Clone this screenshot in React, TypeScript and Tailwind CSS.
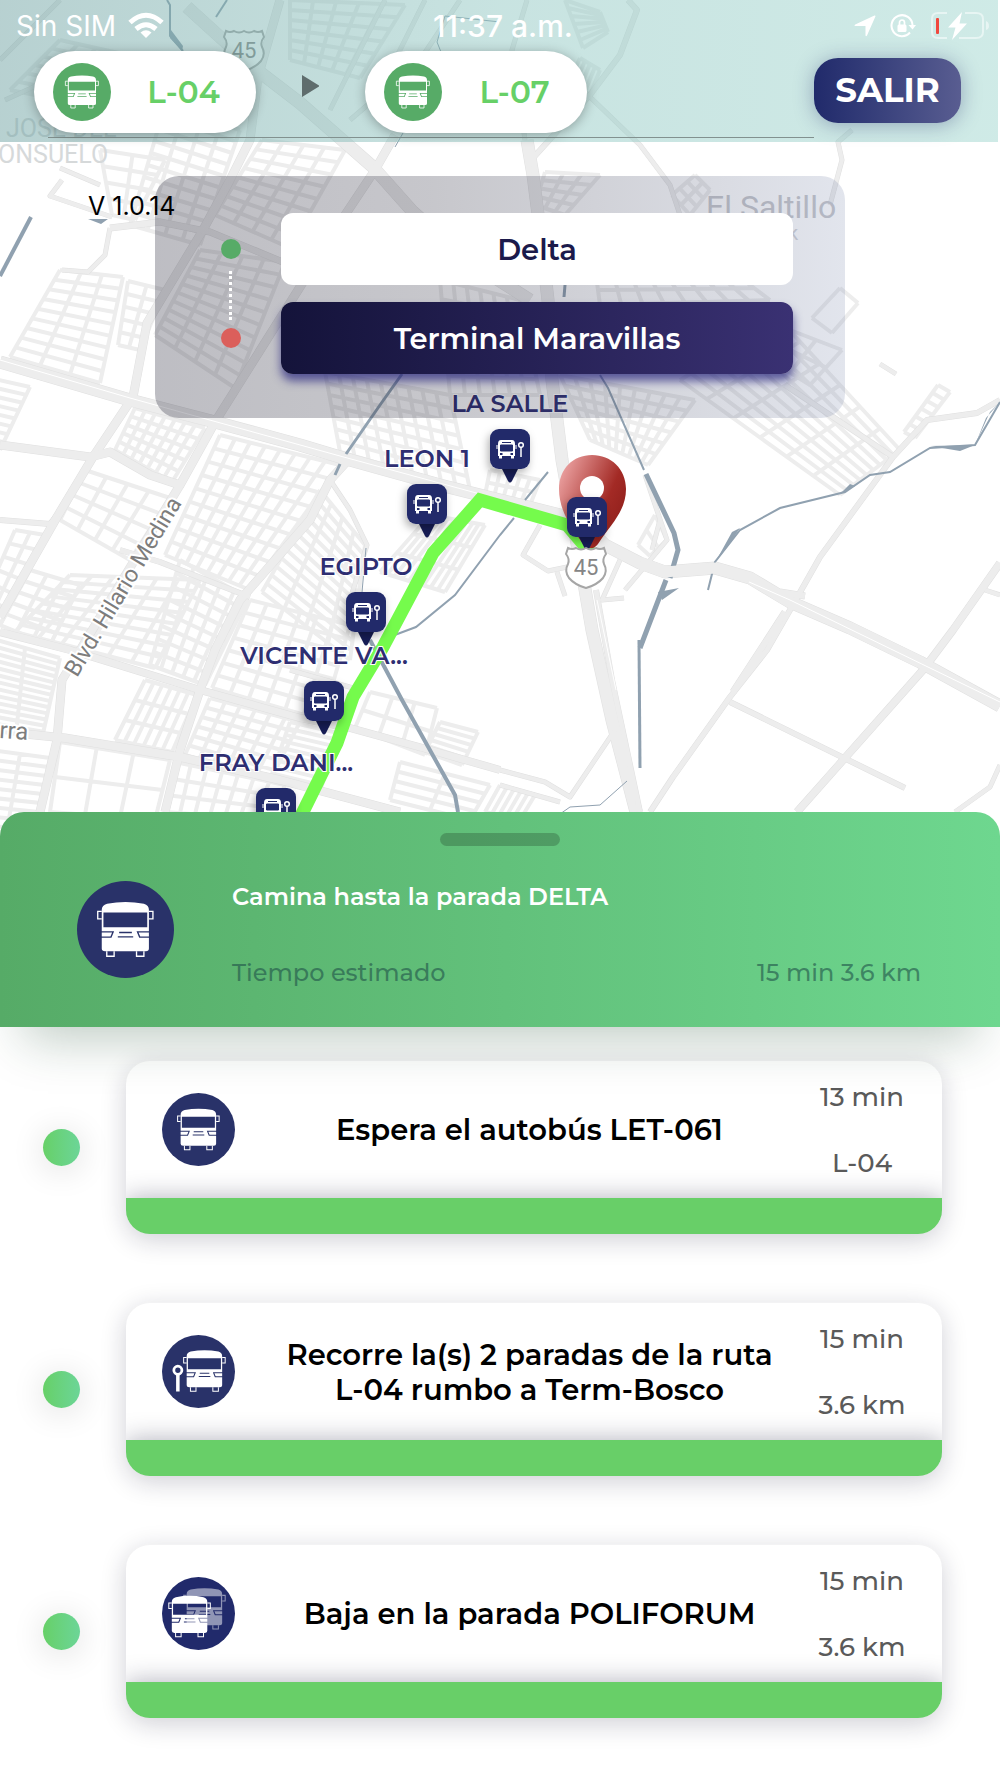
import type { ReactNode } from "react";

type Point = [number, number];

// Calles principales: trazado y ancho
const roads = [
  { d: "M187 7L253 67L300 103L373 167L413 212L470 262L530 300", w: 12 },
  { d: "M527 140L533 175L540 230L548 300L552 380L562 460L580 560L592 630L612 720L636 812", w: 12 },
  { d: "M596 590L612 680L640 812", w: 5 },
  { d: "M280 0L258 77L250 140L230 180L203 230L177 273L147 323L133 397L93 457L57 517L0 617", w: 8 },
  { d: "M0 362L130 400L215 422L300 445L350 460L440 485L500 500L580 520L605 545L640 563L665 572L715 568L750 578L790 602L850 628L920 662L1000 706", w: 12 },
  { d: "M0 445L90 457L110 452L150 475L180 485L215 422L300 287L345 215L375 170L395 135", w: 8 },
  { d: "M180 485L62 680L57 740L40 812", w: 8 },
  { d: "M350 458L330 480L310 520L240 600L215 650L200 690L180 750L165 812", w: 8 },
  { d: "M0 632L70 650L200 690L300 718L350 728L430 750L500 770", w: 7 },
  { d: "M25 734L65 738L180 757L280 780L400 812", w: 8 },
  { d: "M0 520L50 524L60 512", w: 5 },
  { d: "M120 550L160 562L250 597", w: 5 },
  { d: "M797 812L923 670L953 630L1000 563", w: 7 },
  { d: "M650 812L673 777L730 697L767 650L790 610L820 557L893 457L927 420L977 413L1000 400", w: 5 },
  { d: "M733 692L785 612M780 592L805 596", w: 6 },
  { d: "M730 702L905 788", w: 5 },
  { d: "M785 385L893 457", w: 5 },
  { d: "M500 770L545 782L570 797L615 730", w: 4 },
  { d: "M500 785L560 802", w: 4 },
  { d: "M628 0L637 10L620 55L590 95L533 158L540 230", w: 5 },
  { d: "M590 97L640 145L670 185L680 215M527 0L512 50L525 140", w: 4 },
  { d: "M852 130L838 142L842 160L830 205M880 364L896 374", w: 4 },
  { d: "M540 525L523 555L548 571L572 566M557 572L565 596M620 560L602 600L624 598", w: 4 },
  { d: "M645 475L667 540L625 590M652 550L660 520", w: 4 },
  { d: "M62 180L50 196L112 217M110 228L105 255L88 272L62 270M60 168L100 185", w: 4 },
  { d: "M110 228L160 222L210 232L290 265", w: 6 },
  { d: "M0 60L60 0M5 100L60 75L110 110M350 120L420 60L460 0", w: 4 },
  { d: "M385 0L330 110M425 0L380 90M395 75L520 110", w: 4 },
  { d: "M330 480L350 510L367 545L350 600M290 670L360 690", w: 4 },
  { d: "M985 590L1000 595M1000 765L990 787L955 812", w: 4 },
];

// Manzanas: cuatro esquinas, filas y columnas
const blocks: { q: [Point, Point, Point, Point]; rows: number; cols: number }[] = [
  { q: [[60, 270], [123, 277], [100, 383], [10, 357]], rows: 9, cols: 3 },
  { q: [[128, 281], [165, 290], [140, 350], [118, 345]], rows: 5, cols: 2 },
  { q: [[200, 250], [285, 262], [235, 388], [155, 335]], rows: 10, cols: 4 },
  { q: [[165, 105], [240, 130], [200, 245], [130, 225]], rows: 10, cols: 4 },
  { q: [[262, 140], [345, 150], [290, 248], [215, 215]], rows: 8, cols: 4 },
  { q: [[100, 150], [165, 160], [135, 220], [112, 215]], rows: 4, cols: 2 },
  { q: [[60, 40], [150, 60], [110, 110], [10, 90]], rows: 6, cols: 5 },
  { q: [[290, 0], [405, 5], [360, 78], [290, 60]], rows: 6, cols: 5 },
  { q: [[-10, 378], [30, 387], [0, 450], [-20, 445]], rows: 8, cols: 1 },
  { q: [[135, 408], [205, 428], [172, 482], [115, 450]], rows: 5, cols: 7 },
  { q: [[220, 435], [340, 465], [250, 590], [165, 555]], rows: 9, cols: 8 },
  { q: [[85, 470], [170, 498], [130, 560], [60, 520]], rows: 4, cols: 4 },
  { q: [[70, 575], [200, 580], [155, 668], [15, 632]], rows: 8, cols: 6 },
  { q: [[180, 560], [248, 598], [205, 685], [150, 665]], rows: 8, cols: 5 },
  { q: [[30, 570], [80, 585], [50, 645], [0, 625]], rows: 5, cols: 3 },
  { q: [[250, 600], [350, 625], [322, 720], [212, 688]], rows: 7, cols: 6 },
  { q: [[320, 490], [365, 545], [350, 660], [262, 592]], rows: 12, cols: 4 },
  { q: [[-10, 638], [60, 658], [42, 738], [-10, 730]], rows: 13, cols: 2 },
  { q: [[15, 530], [45, 535], [0, 625], [-20, 610]], rows: 6, cols: 2 },
  { q: [[145, 680], [197, 695], [172, 752], [115, 740]], rows: 3, cols: 6 },
  { q: [[210, 698], [300, 722], [270, 780], [185, 755]], rows: 6, cols: 6 },
  { q: [[290, 722], [338, 733], [320, 792], [270, 780]], rows: 9, cols: 1 },
  { q: [[175, 762], [285, 785], [270, 820], [165, 812]], rows: 3, cols: 7 },
  { q: [[-10, 750], [50, 758], [35, 830], [-20, 825]], rows: 8, cols: 2 },
  { q: [[60, 742], [170, 760], [155, 820], [50, 812]], rows: 2, cols: 3 },
  { q: [[325, 372], [450, 395], [470, 490], [340, 452]], rows: 7, cols: 9 },
  { q: [[430, 515], [485, 525], [445, 592], [380, 572]], rows: 3, cols: 9 },
  { q: [[490, 470], [540, 480], [530, 505], [485, 495]], rows: 2, cols: 5 },
  { q: [[440, 280], [520, 300], [540, 395], [450, 395]], rows: 6, cols: 6 },
  { q: [[560, 375], [695, 400], [648, 465], [590, 440]], rows: 6, cols: 9 },
  { q: [[780, 320], [900, 450], [840, 495], [680, 380]], rows: 9, cols: 6 },
  { q: [[790, 330], [842, 350], [810, 385], [770, 360]], rows: 2, cols: 2 },
  { q: [[840, 288], [858, 303], [832, 333], [812, 318]], rows: 1, cols: 1 },
  { q: [[590, 230], [690, 240], [770, 300], [600, 305]], rows: 5, cols: 8 },
  { q: [[565, 0], [600, 12], [608, 32], [583, 48]], rows: 6, cols: 1 },
  { q: [[545, 172], [600, 175], [565, 215], [535, 205]], rows: 4, cols: 3 },
  { q: [[580, 58], [600, 70], [590, 95], [570, 80]], rows: 1, cols: 4 },
  { q: [[695, 175], [710, 190], [690, 215], [672, 195]], rows: 3, cols: 2 },
  { q: [[938, 385], [950, 392], [915, 438], [904, 432]], rows: 6, cols: 1 },
  { q: [[370, 692], [437, 708], [425, 755], [355, 728]], rows: 2, cols: 3 },
  { q: [[440, 722], [478, 732], [462, 765], [425, 752]], rows: 5, cols: 1 },
  { q: [[400, 762], [490, 785], [470, 820], [390, 800]], rows: 4, cols: 2 },
  { q: [[500, 785], [535, 795], [520, 820], [485, 812]], rows: 1, cols: 5 },
  { q: [[655, 515], [667, 540], [650, 556], [638, 545]], rows: 2, cols: 1 },
];

const rivers = [
  { d: "M167 0L170 5L170 36L183 51", w: 2 },
  { d: "M227 0L216 17", w: 2 },
  { d: "M500 22L445 16L437 42L441 52", w: 1 },
  { d: "M403 133L395 147", w: 1 },
  { d: "M31 217L0 276", w: 4 },
  { d: "M402 374L380 405L346 454M340 464L335 475", w: 3 },
  { d: "M565 285L564 297", w: 3 },
  { d: "M600 375L608 388L644 470", w: 2 },
  { d: "M646 474L674 533L678 550L670 578M666 580L640 648", w: 5 },
  { d: "M639 640L640 768", w: 3 },
  { d: "M627 781L600 805L570 807L560 814", w: 1 },
  { d: "M1000 402L975 445L930 448L890 472L870 475L845 492L780 508L740 530L715 562L708 590", w: 2 },
  { d: "M548 472L525 500M514 518L500 535L455 595L416 627L392 636", w: 2 },
  { d: "M366 548L362 592", w: 1 },
  { d: "M370 640L402 700L455 795L458 812", w: 4 },
];

const stops = [
  { name: "LA SALLE", x: 510, y: 429 },
  { name: "LEON 1", x: 427, y: 484 },
  { name: "EGIPTO", x: 366, y: 592 },
  { name: "VICENTE VA...", x: 324, y: 681 },
  { name: "FRAY DANI...", x: 276, y: 788 },
  { name: "", x: 587, y: 497 },
];

const lerp = (a: Point, b: Point, t: number): Point => [a[0] + (b[0] - a[0]) * t, a[1] + (b[1] - a[1]) * t];

const blockPath = ([a, b, c, d]: [Point, Point, Point, Point], rows: number, cols: number) => {
  const lines: string[] = [];
  for (let i = 0; i <= rows; i++) lines.push(`M${lerp(a, d, i / rows)}L${lerp(b, c, i / rows)}`);
  for (let i = 0; i <= cols; i++) lines.push(`M${lerp(a, b, i / cols)}L${lerp(d, c, i / cols)}`);
  return lines.join("");
};

const busBody =
  "M14 24Q14 10 30 6Q85 -5 140 6Q155 10 155 24V140Q155 148 146 148H24Q14 148 14 140Z" +
  "M19 32V76H150V32Z" +
  "M14 88H51L43 108H14V104H40L45 92H14Z" +
  "M155 88H118L126 108H155V104H129L124 92H155Z" +
  "M66 90V94H104V90ZM62 103V107H108V103Z";

const Bus = () => (
  <>
    <path d={busBody} fill="#fff" fillRule="evenodd" />
    <path d="M14 29H2V51H14M155 29H167V51H155M29 148V163H51V148M118 148V163H140V148" fill="none" stroke="#fff" strokeWidth="4" />
  </>
);

const RoundIcon = ({ className, children }: { className: string; children: ReactNode }) => (
  <svg viewBox="0 0 290 290" className={className} aria-hidden="true">
    <circle cx="145" cy="145" r="145" fill="currentColor" />
    {children}
  </svg>
);

const BusIcon = () => (
  <g transform="translate(60 62)">
    <Bus />
  </g>
);

const RideIcon = () => (
  <>
    <g transform="translate(84 60)">
      <Bus />
    </g>
    <circle cx="63" cy="140" r="16" fill="none" stroke="#fff" strokeWidth="11" />
    <path d="M63 156V224" stroke="#fff" strokeWidth="14" />
  </>
);

const ExitIcon = () => (
  <>
    <g transform="translate(84 44)" opacity=".5">
      <Bus />
    </g>
    <g transform="translate(25 74)">
      <Bus />
    </g>
  </>
);

const StopPin = ({ x, y }: { x: number; y: number }) => (
  <g transform={`translate(${x - 20} ${y})`}>
    <path d="M11 38H29L22 52Q20 55 18 52Z" fill="#171d56" />
    <rect width="40" height="40" rx="9" fill="#212a6b" filter="url(#pin-shadow)" />
    <path d="M11 11H22Q25 11 25 15V27H8V15Q8 11 11 11Z" fill="#fff" />
    <path d="M12 13.500H21M10.500 16H22.500V22H10.500Z" fill="#212a6b" stroke="#212a6b" strokeWidth="1" />
    <path d="M9 27V29.500H12V27M21 27V29.500H24V27" fill="#fff" />
    <path d="M7 16V20M26 16V20" stroke="#fff" strokeWidth="1" />
    <path d="M10 25H12.500M20.500 25H23" stroke="#212a6b" strokeWidth="2" />
    <circle cx="31" cy="16" r="2.300" fill="none" stroke="#fff" strokeWidth="1.500" />
    <path d="M31 18V28" stroke="#fff" strokeWidth="1.500" />
  </g>
);

const Shield = ({ x, y }: { x: number; y: number }) => (
  <g transform={`translate(${x} ${y})`}>
    <path
      d="M-18 -19Q-14 -17 -10 -19Q-5 -16 0 -19Q5 -16 10 -19Q14 -17 18 -19L20 -13Q16 -8 18 -3Q22 4 17 11Q11 18 0 21Q-11 18 -17 11Q-22 4 -18 -3Q-16 -8 -20 -13Z"
      fill="#fff"
      stroke="#a6a6a6"
      strokeWidth="2"
    />
    <text y="8" textAnchor="middle" fontSize="22" fill="#858585">
      45
    </text>
  </g>
);

const CityMap = () => (
  <svg
    viewBox="0 0 1000 840"
    preserveAspectRatio="xMidYMin slice"
    className="absolute inset-0 h-full w-full font-['Roboto',sans-serif]"
    role="img"
    aria-label="Mapa de la ruta">
    <defs>
      <filter id="pin-shadow" x="-50%" y="-50%" width="200%" height="200%">
        <feDropShadow dx="-2" dy="4" stdDeviation="4" floodOpacity=".3" />
      </filter>
      <linearGradient id="destination" x1="0" y1="0.100" x2="1" y2="0.700">
        <stop offset="0" stopColor="#f0a9a9" />
        <stop offset=".7" stopColor="#a32a25" />
        <stop offset="1" stopColor="#8f1f1b" />
      </linearGradient>
    </defs>

    {/* Calles */}
    <g fill="none" stroke="#ededed" strokeWidth="4" strokeLinejoin="round">
      {blocks.map((block, index) => (
        <path key={index} d={blockPath(block.q, block.rows, block.cols)} />
      ))}
    </g>

    {/* Avenidas */}
    <g fill="none" strokeLinejoin="round">
      {roads.map((road) => (
        <path key={road.d} d={road.d} stroke="#e0e0e0" strokeWidth={road.w + 1} />
      ))}
      {roads.map((road) => (
        <path key={road.d} d={road.d} stroke="#ededed" strokeWidth={road.w} />
      ))}
      <path d="M0 360L130 398L340 456L480 494M597 600L616 690M660 571L715 567L790 600L1000 702" stroke="#fff" strokeWidth="1" />
    </g>

    {/* Ríos */}
    <g fill="none" stroke="#90a1b0">
      {rivers.map((river) => (
        <path key={river.d} d={river.d} strokeWidth={river.w} />
      ))}
    </g>
    <path d="M930 446L975 445L960 451ZM658 592L679 588L662 600ZM88 219H108L101 224ZM1000 402L990 412L975 445L986 418ZM740 528L728 546L716 561L732 532ZM840 494L850 484L855 486ZM171 30L183 46L182 51L170 38Z" fill="#90a1b0" />
    <path d="M640 563L665 572L715 568L750 578" fill="none" stroke="#ededed" strokeWidth="11" />

    {/* Rótulos */}
    <Shield x={244} y={50} />
    <g fill="#d6d9da" fontSize="25">
      <text x="-18" y="137">N JOSE DEL</text>
      <text x="-2" y="163">ONSUELO</text>
    </g>
    <text x="706" y="218" fontSize="32" fill="#c6c7cc">
      El Saltillo
    </text>
    <text x="788" y="240" fontSize="20" fill="#d3d4d8">
      k
    </text>
    <g fill="#7d7d7d" stroke="#fff" strokeWidth="4" paintOrder="stroke" fontSize="23">
      <text transform="translate(77 678) rotate(-59)">Blvd. Hilario Medina</text>
      <text transform="translate(-1 738) rotate(4)" fontSize="24">
        rra
      </text>
    </g>

    {/* Ruta */}
    <path d="M296 826L337 743L353 697L383 647L433 553L480 500L567 525L590 552" fill="none" stroke="#75fb4c" strokeWidth="13" />
    <path
      d="M592 455C573 455 559 469 559 489C559 512 573 530 584 545Q592 552 598 544C611 524 626 511 626 489C626 469 611 455 592 455Z"
      fill="url(#destination)"
    />
    <circle cx="592" cy="488" r="12" fill="#fff" />
    {stops.map((stop) => (
      <StopPin key={`${stop.x}-${stop.y}`} x={stop.x} y={stop.y} />
    ))}
    <Shield x={586} y={567} />
    <g className="font-['Montserrat',Inter,sans-serif]" fill="#2e2e72" stroke="#fff" strokeWidth="2" paintOrder="stroke" fontSize="24" fontWeight="600" textAnchor="middle">
      {stops.map((stop) => (
        <text key={`${stop.x}-${stop.y}`} x={stop.x} y={stop.y - 17}>
          {stop.name}
        </text>
      ))}
    </g>
  </svg>
);

const StatusBar = () => (
  <div className="grid h-[51px] grid-cols-3 items-center pr-2 pl-4 font-['Inter',sans-serif] text-[28px] text-white">
    <div className="flex items-center gap-3">
      <span>Sin SIM</span>
      <svg viewBox="0 0 36 27" className="h-[27px] w-9" fill="none" stroke="#fff" strokeWidth="5" aria-hidden="true">
        <path d="M2 10.500Q18 -4 34 10.500" />
        <path d="M8 17Q18 8.500 28 17" />
        <path d="M18 26L12.500 20.500Q18 16 23.500 20.500Z" fill="#fff" stroke="none" />
      </svg>
    </div>
    <span className="text-center text-3xl font-medium">11:37 a.m.</span>
    <div className="flex items-center justify-end gap-[14px]">
      <svg viewBox="0 0 22 22" className="h-[22px] w-[22px]" aria-hidden="true">
        <path d="M20.500 .6Q22 .2 21.300 1.800L13 20.500Q12 22 11.500 20.500V11H1.500Q-.5 10.400 1.200 9.400Z" fill="#fff" />
      </svg>
      <svg viewBox="0 0 26 26" className="h-[26px] w-[26px]" fill="none" stroke="#fff" strokeWidth="2" aria-hidden="true">
        <path d="M20 19.500A10.500 10.500 0 1 1 22.500 12" />
        <path d="M18.500 12H26L22.500 16.500Z" fill="#fff" stroke="none" />
        <rect x="7.500" y="11.500" width="9" height="7.500" rx="1.500" fill="#fff" stroke="none" />
        <path d="M9.500 12V9.500A2.500 2.500 0 0 1 14.500 9.500V12" strokeWidth="1.700" />
      </svg>
      <svg viewBox="0 0 60 30" className="h-[30px] w-[60px]" aria-hidden="true">
        <path d="M17 2H8Q2 2 2 8V21Q2 27 8 27H17M35 2H46Q53 2 53 8V21Q53 27 46 27H29" fill="none" stroke="#fff" strokeWidth="2" opacity=".5" />
        <path d="M56 10Q59 11 59 15Q59 18 56 19Z" fill="#fff" opacity=".5" />
        <rect x="6" y="7" width="3" height="16" rx="1" fill="#f0483e" />
        <path d="M32 1L18 16.500H25.500L22 29L37 12.500H29.500Z" fill="#fff" />
      </svg>
    </div>
  </div>
);

const LinePill = ({ line }: { line: string }) => (
  <div className="flex h-[82px] w-[222px] items-center rounded-full bg-white pl-[19px] shadow-[0_2px_12px_rgba(0,0,0,0.3)]">
    <RoundIcon className="h-[58px] w-[58px] shrink-0 text-[#57ab67]">
      <BusIcon />
    </RoundIcon>
    <span className="flex-1 text-center text-[31px] font-semibold text-[#67d067]">{line}</span>
  </div>
);

const steps = [
  { icon: <BusIcon />, color: "text-[#293269]", title: "Espera el autobús LET-061", time: "13 min", detail: "L-04" },
  { icon: <RideIcon />, color: "text-[#293269]", title: "Recorre la(s) 2 paradas de la ruta L-04 rumbo a Term-Bosco", time: "15 min", detail: "3.6 km" },
  { icon: <ExitIcon />, color: "text-[#212a6b]", title: "Baja en la parada POLIFORUM", time: "15 min", detail: "3.6 km" },
];

const App = () => {
  return (
    <main className="min-h-screen bg-white font-['Montserrat',Inter,sans-serif]">
      {/* Mapa */}
      <section className="relative min-h-[840px] overflow-hidden">
        <CityMap />

        <header className="relative mr-0.5 h-[142px] bg-linear-to-r from-[rgba(112,163,163,0.5)] via-[rgba(140,197,192,0.48)] to-[rgba(155,212,204,0.48)]">
          <StatusBar />
          <div className="flex items-center gap-[46px] pr-[37px] pl-[34px]">
            <LinePill line="L-04" />
            <svg viewBox="0 0 17 22" className="mb-3 h-[22px] w-[17px]" aria-hidden="true">
              <path d="M0 0L17 10.500V11.500L0 22Z" fill="#5f6d6d" />
            </svg>
            <LinePill line="L-07" />
            <button
              type="button"
              className="mb-1 ml-auto h-[65px] w-[147px] rounded-3xl bg-linear-to-r from-[#212a6b] to-[#595d91] text-[34px] font-bold text-white shadow-[0_2px_20px_rgba(33,42,107,0.35)]">
              SALIR
            </button>
          </div>
          <hr className="mt-1 mr-[184px] ml-12 border-[#82918f]" />
        </header>

        {/* Origen y destino */}
        <div className="relative mx-auto mt-[34px] flex w-[69%] rounded-3xl bg-linear-to-r from-[rgba(20,20,40,0.28)] via-[rgba(20,20,40,0.24)] via-40% to-[rgba(110,125,165,0.2)] pt-[37px] pr-[52px] pb-[44px] pl-[66px]">
          <div className="flex w-[60px] shrink-0 flex-col items-start pt-[26px]">
            <span className="h-5 w-5 rounded-full bg-[#57ab67]" />
            <span className="mt-3 mb-2 ml-2 h-[49px] border-l-3 border-dotted border-white" />
            <span className="h-5 w-5 rounded-full bg-[#db5f5b]" />
          </div>
          <div className="flex min-w-0 flex-1 flex-col gap-[17px]">
            <input
              aria-label="Origen"
              defaultValue="Delta"
              className="h-[72px] w-full rounded-xl bg-white text-center text-[29px] font-semibold text-[#1b1a4b]"
            />
            <input
              aria-label="Destino"
              defaultValue="Terminal Maravillas"
              className="h-[72px] w-full rounded-xl bg-linear-to-r from-[#14133a] to-[#3a3173] text-center text-[29px] font-semibold text-white shadow-[0_7px_10px_rgba(48,46,130,0.75)]"
            />
          </div>
        </div>
        <p className="absolute top-[188px] left-[88px] font-['Inter',sans-serif] text-[25px] leading-9 text-black">V 1.0.14</p>
      </section>

      {/* Paso actual */}
      <section className="relative z-10 -mt-7 rounded-t-3xl bg-linear-to-r from-[#56ab67] to-[#6ed78f] pt-[21px] pb-[38px] shadow-[0_36px_48px_-24px_rgba(20,70,40,0.28)]">
        <div className="mx-auto h-[13px] w-[120px] rounded-full bg-black/20" />
        <div className="mt-[35px] flex items-start gap-[58px] pr-[79px] pl-[77px]">
          <RoundIcon className="h-[97px] w-[97px] shrink-0 text-[#293269]">
            <BusIcon />
          </RoundIcon>
          <div className="flex-1 text-2xl">
            <h1 className="font-semibold text-white">Camina hasta la parada DELTA</h1>
            <div className="mt-11 flex justify-between font-medium text-[#1f5149]/60">
              <span>Tiempo estimado</span>
              <span>15 min 3.6 km</span>
            </div>
          </div>
        </div>
      </section>

      {/* Pasos siguientes */}
      <ol className="flex flex-col gap-[68px] pt-[33px] pr-[58px] pb-[60px] pl-[43px]">
        {steps.map((step) => (
          <li key={step.title} className="flex items-center gap-[46px]">
            <span className="h-[37px] w-[37px] shrink-0 rounded-full bg-linear-to-r from-[#67d067] to-[#6cd597] shadow-[0_4px_34px_rgba(0,0,0,0.14)]" />
            <article className="flex-1 overflow-hidden rounded-3xl border-t border-[#f3f3f4] bg-white shadow-[0_6px_26px_rgba(20,20,50,0.2)]">
              <div className="flex h-[137px] items-center pl-9">
                <RoundIcon className={`h-[73px] w-[73px] shrink-0 ${step.color}`}>{step.icon}</RoundIcon>
                <h2 className="flex-1 pl-[42px] text-center text-[29px] leading-[35px] font-semibold text-black">{step.title}</h2>
                <div className="flex w-40 shrink-0 flex-col gap-[30px] text-center text-[26px] leading-9 font-medium text-[#5a5a5a]">
                  <span>{step.time}</span>
                  <span>{step.detail}</span>
                </div>
              </div>
              <div className="h-9 bg-[#68cf68] shadow-[0_0_26px_rgba(30,30,60,0.35)]" />
            </article>
          </li>
        ))}
      </ol>
    </main>
  );
};

export default App;
